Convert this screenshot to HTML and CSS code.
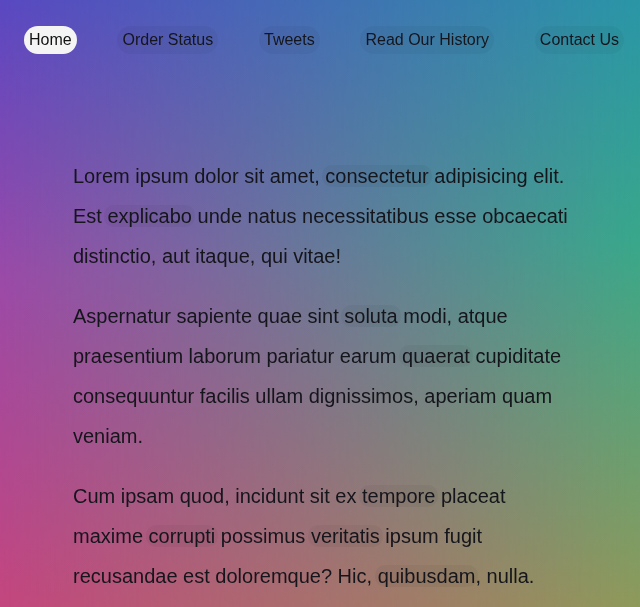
FILE: index.html
```html
<!DOCTYPE html>
<html lang="en">
<head>
<meta charset="utf-8">
<title>Home</title>
<link rel="stylesheet" href="styles.css">
</head>
<body>
<nav class="nav">
  <a class="nav-link active" href="#">Home</a>
  <a class="nav-link" href="#">Order Status</a>
  <a class="nav-link" href="#">Tweets</a>
  <a class="nav-link" href="#">Read Our History</a>
  <a class="nav-link" href="#">Contact Us</a>
</nav>
<main class="content">
  <p>Lorem ipsum dolor sit amet, <span class="hl">consectetur</span> adipisicing elit. Est <span class="hl">explicabo</span> unde natus necessitatibus esse obcaecati distinctio, aut itaque, qui vitae!</p>
  <p>Aspernatur sapiente quae sint <span class="hl">soluta</span> modi, atque praesentium laborum pariatur earum <span class="hl">quaerat</span> cupiditate consequuntur facilis ullam dignissimos, aperiam quam veniam.</p>
  <p>Cum ipsam quod, incidunt sit ex <span class="hl">tempore</span> placeat maxime <span class="hl">corrupti</span> possimus <span class="hl">veritatis</span> ipsum fugit recusandae est doloremque? Hic, <span class="hl">quibusdam</span>, nulla.</p>
</main>
</body>
</html>
```
FILE: styles.css
```css
html {
  min-height: 100%;
  background: linear-gradient(to bottom, #5a48c2 0%, #9a4aa8 45%, #c4467e 100%);
  background-attachment: fixed;
}
body {
  margin: 0;
  font-family: "Liberation Sans", Arial, sans-serif;
  color: #15151c;
}
body::before {
  content: "";
  position: fixed;
  inset: 0;
  z-index: -1;
  background: linear-gradient(to bottom, #2a96a6 0%, #38a88a 40%, #8e9a5a 100%);
  -webkit-mask-image: linear-gradient(to right, transparent 0%, rgba(0,0,0,0.5) 50%, #000 100%);
  mask-image: linear-gradient(to right, transparent 0%, rgba(0,0,0,0.5) 50%, #000 100%);
}
.nav {
  display: flex;
  justify-content: space-between;
  align-items: center;
  padding: 26px 16px 0 24px;
}
.nav-link {
  font-size: 16px;
  line-height: 18px;
  padding: 5px 5px;
  border-radius: 14px;
  color: #15151c;
  text-decoration: none;
  background: rgba(0, 0, 0, 0.04);
}
.nav-link.active {
  background: #f4f4f4;
  color: #111;
}
.content {
  width: 500px;
  margin: 0 0 0 73px;
  padding-top: 102px;
  font-size: 20px;
  line-height: 40px;
}
.content p {
  margin: 0 0 20px;
}
.hl {
  background: rgba(0, 0, 0, 0.04);
  border-radius: 10px;
  box-shadow: -3px 0 0 0 rgba(0, 0, 0, 0.04), 3px 0 0 0 rgba(0, 0, 0, 0.04);
}
```
